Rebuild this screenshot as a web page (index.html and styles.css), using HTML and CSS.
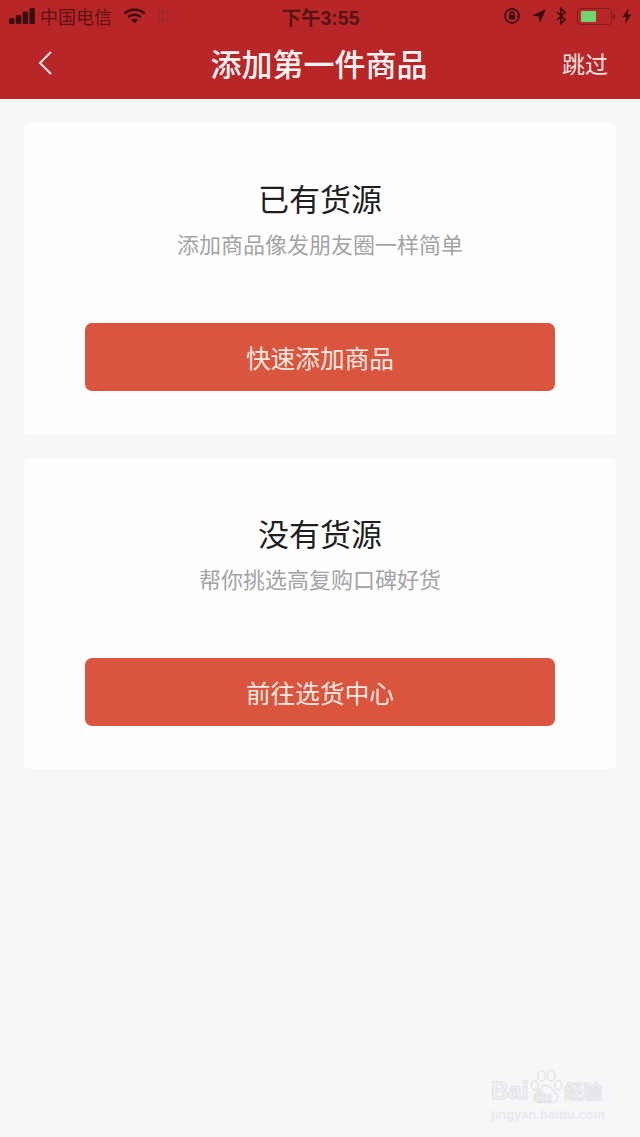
FILE: index.html
```html
<!DOCTYPE html>
<html lang="zh-CN">
<head>
    <meta charset="UTF-8">
    <meta name="viewport" content="width=device-width, initial-scale=1.0">
    <title>添加第一件商品</title>
    <link rel="stylesheet" href="styles.css">
</head>
<body>
    <header class="top-bar">
        <div class="status-bar">
            <div class="status-left">
                <svg class="signal" width="26" height="16" viewBox="0 0 26 16">
                    <rect x="0" y="10" width="5.500" height="6" rx="1.500"/>
                    <rect x="6.800" y="7" width="5.500" height="9" rx="1.500"/>
                    <rect x="13.600" y="3.500" width="5.500" height="12.500" rx="1.500"/>
                    <rect x="20.400" y="0" width="5.500" height="16" rx="1.500"/>
                </svg>
                <span class="carrier">中国电信</span>
                <svg class="wifi" width="23" height="16" viewBox="0 0 23 16" fill="none">
                    <path d="M1.500 5.500C7 0.500 16 0.500 21.500 5.500" stroke-width="2.600"/>
                    <path d="M5 9C8.500 6 14.500 6 18 9" stroke-width="2.600"/>
                    <path d="M11.500 15.500L8 11.800C10 10.400 13 10.400 15 11.800Z" class="wifi-tip"/>
                </svg>
                <svg class="spinner" width="16" height="16" viewBox="0 0 16 16">
                    <path d="M8 1V5M8 11V15M1 8H5M11 8H15M3 3L5.500 5.500M10.500 10.500L13 13M13 3L10.500 5.500M5.500 10.500L3 13"/>
                </svg>
            </div>
            <div class="status-time">下午3:55</div>
            <div class="status-right">
                <svg class="lock-rotate" width="18" height="18" viewBox="0 0 18 18" fill="none">
                    <path d="M15.500 11.500A7 7 0 1 1 16 9"/>
                    <path d="M13.500 9.500L16 12L17.500 8.500Z" class="solid"/>
                    <rect x="6" y="7.500" width="6" height="5" rx="1" class="solid"/>
                    <path d="M7.300 7.500V6.500A1.700 1.700 0 0 1 10.700 6.500V7.500" stroke-width="1.200"/>
                </svg>
                <svg class="location" width="16" height="16" viewBox="0 0 16 16">
                    <path d="M15 1L1 7.500L7.500 8.500L9 15Z"/>
                </svg>
                <svg class="bluetooth" width="10" height="18" viewBox="0 0 10 18" fill="none">
                    <path d="M1 5L9 12.500L5 16.500V1.500L9 5.500L1 13"/>
                </svg>
                <div class="battery"><div class="battery-level"></div></div>
                <span class="battery-cap"></span>
                <svg class="charging" width="10" height="16" viewBox="0 0 10 16">
                    <path d="M6.500 0L0.500 9H4L3 16L9.500 6.500H5.500Z"/>
                </svg>
            </div>
        </div>
        <nav class="nav-bar">
            <svg class="back" width="16" height="26" viewBox="0 0 16 26" fill="none">
                <path d="M14 2L3 13L14 24"/>
            </svg>
            <h1 class="nav-title">添加第一件商品</h1>
            <span class="skip">跳过</span>
        </nav>
    </header>

    <main class="content">
        <section class="card">
            <h2 class="card-title">已有货源</h2>
            <p class="card-desc">添加商品像发朋友圈一样简单</p>
            <button class="card-btn">快速添加商品</button>
        </section>
        <section class="card">
            <h2 class="card-title">没有货源</h2>
            <p class="card-desc">帮你挑选高复购口碑好货</p>
            <button class="card-btn">前往选货中心</button>
        </section>
    </main>

    <!-- watermark, sits over the page corner -->
    <div class="watermark">
        <div class="wm-logo">
            <span class="wm-latin">Bai</span>
            <div class="wm-paw">
                <svg width="34" height="38" viewBox="0 0 38 44" fill="none">
                    <ellipse cx="6" cy="20" rx="4" ry="5.500"/>
                    <ellipse cx="14" cy="9" rx="4.500" ry="6"/>
                    <ellipse cx="25" cy="9" rx="4.500" ry="6"/>
                    <ellipse cx="33" cy="20" rx="4" ry="5.500"/>
                    <path d="M19 20C13 20 11 26 7 30C3 35 7 41 13 40C17 39 21 39 25 40C31 41 35 35 31 30C27 26 25 20 19 20Z"/>
                </svg>
                <span class="wm-du">du</span>
            </div>
            <span class="wm-cn">经验</span>
        </div>
        <div class="wm-url">jingyan.baidu.com</div>
    </div>
</body>
</html>
```

FILE: styles.css
```css
html, body {
    height: 100%;
}
body {
    font-family: "Noto Sans CJK SC", "Liberation Sans", sans-serif;
    margin: 0;
    background-color: #f7f6f9;
    position: relative;
    overflow: hidden;
}

/* top bar */
.top-bar {
    height: 99px;
    background-color: #b92628;
}
.status-bar {
    height: 32px;
    display: grid;
    grid-template-columns: 1fr auto 1fr;
    align-items: center;
    padding: 0 8px 0 9px;
    color: #5a1414;
}
.status-left, .status-right {
    display: flex;
    align-items: center;
}
.status-right {
    justify-content: flex-end;
}
.signal {
    fill: #3a0f10;
}
.carrier {
    font-size: 18px;
    margin-left: 5px;
    color: #5a1314;
}
.wifi {
    margin-left: 11px;
}
.wifi path {
    stroke: #3a0f10;
}
.wifi .wifi-tip {
    stroke: none;
    fill: #3a0f10;
}
.spinner {
    margin-left: 9px;
}
.spinner path {
    stroke: #7d2b2b;
    stroke-width: 1.200;
}
.status-time {
    font-family: "Liberation Sans", "Noto Sans CJK SC", sans-serif;
    font-size: 19.500px;
    font-weight: bold;
    color: #571415;
}
.lock-rotate path, .bluetooth path {
    stroke: #3a0f10;
    stroke-width: 1.600;
}
.lock-rotate .solid {
    fill: #3a0f10;
    stroke: none;
}
.location {
    fill: #3a0f10;
    margin-left: 10px;
}
.bluetooth {
    margin-left: 9px;
}
.battery {
    width: 35px;
    height: 17px;
    box-sizing: border-box;
    margin-left: 11px;
    padding: 2px 3px;
    border: 1px solid #7a1c1d;
    border-radius: 4px;
}
.battery-level {
    width: 15px;
    height: 100%;
    background-color: #6fd66f;
    border-radius: 1px;
}
.battery-cap {
    width: 2px;
    height: 5px;
    margin-left: 1px;
    background-color: #7a1c1d;
}
.charging {
    fill: #3a0f10;
    margin-left: 7px;
}

.nav-bar {
    height: 67px;
    box-sizing: border-box;
    display: grid;
    grid-template-columns: 1fr auto 1fr;
    align-items: center;
    padding: 0 32px 6px 30px;
}
.back {
    margin-left: 7px;
}
.back path {
    stroke: #f6e6e6;
    stroke-width: 2;
}
.nav-title {
    margin: 0;
    font-size: 31px;
    font-weight: 500;
    line-height: 40px;
    color: #fdf5f4;
}
.skip {
    justify-self: end;
    font-size: 23px;
    color: #f8e4e2;
}

/* cards */
.content {
    display: flex;
    flex-direction: column;
    gap: 24px;
    padding: 24px 24px 0;
}
.card {
    height: 311px;
    box-sizing: border-box;
    padding: 54px 61px 0;
    display: flex;
    flex-direction: column;
    align-items: center;
    background-color: #fefefe;
    border-radius: 5px;
}
.card-title {
    margin: 0;
    font-size: 31px;
    font-weight: 400;
    line-height: 42px;
    color: #1f1f1f;
}
.card-desc {
    margin: 8px 0 0;
    font-size: 22px;
    line-height: 32px;
    color: #a3a3a6;
}
.card-btn {
    width: 100%;
    height: 68px;
    margin-top: 64px;
    padding: 0;
    border: none;
    border-radius: 7px;
    background-color: #d9553e;
    font-family: inherit;
    font-size: 24.700px;
    color: #fbe9e2;
    cursor: pointer;
}

/* watermark */
.watermark {
    position: absolute;
    left: 491px;
    top: 1067px;
    color: #f4f3f6;
    -webkit-text-stroke: 1px #e2e1e4;
}
.wm-logo {
    display: flex;
    align-items: flex-end;
    height: 39px;
}
.wm-latin {
    font-family: "Liberation Sans", sans-serif;
    font-size: 24px;
    font-weight: bold;
    line-height: 30px;
}
.wm-paw {
    position: relative;
    margin-left: 1px;
    height: 38px;
    stroke: #e2e1e4;
    stroke-width: 1.500;
}
.wm-du {
    position: absolute;
    left: 5px;
    top: 21px;
    font-family: "Liberation Sans", sans-serif;
    font-size: 14px;
    font-weight: bold;
    line-height: 16px;
}
.wm-cn {
    margin-left: 1px;
    font-size: 19px;
    line-height: 30px;
    font-weight: bold;
}
.wm-url {
    font-family: "Liberation Sans", sans-serif;
    font-size: 13px;
    font-weight: bold;
    line-height: 16px;
    -webkit-text-stroke: 0;
    color: #eae9ec;
    margin-top: 1px;
}
```
